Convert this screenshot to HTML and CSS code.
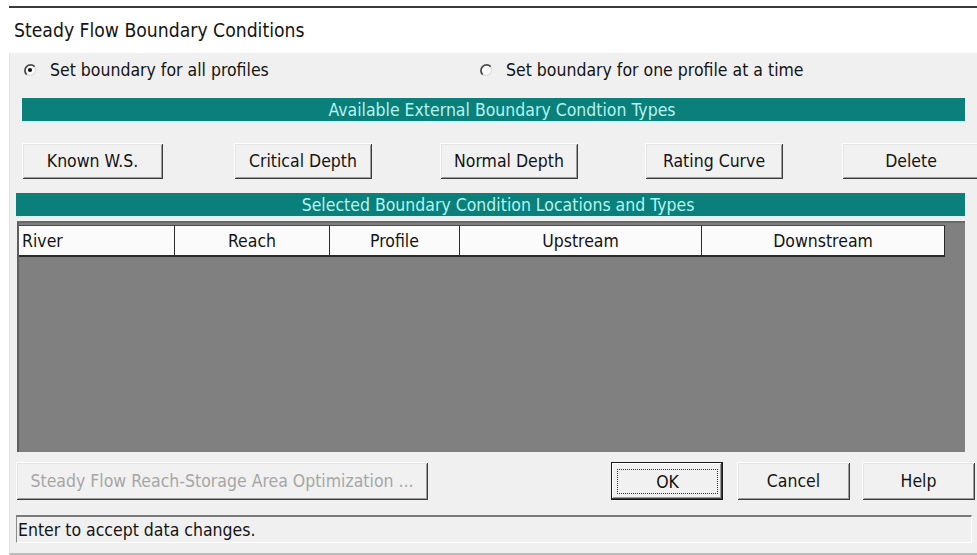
FILE: index.html
```html
<!DOCTYPE html>
<html lang="en">
<head>
<meta charset="utf-8">
<title>Steady Flow Boundary Conditions</title>
<link rel="stylesheet" href="styles.css">
</head>
<body>
<div class="window">
  <div class="caption">Steady Flow Boundary Conditions</div>
  <div class="dialog">
    <div class="radios">
      <label class="opt">
        <svg class="radio" viewBox="0 0 14 14" width="14" height="14">
          <circle cx="7" cy="7" r="5.6" fill="#fbfbfb"/>
          <path d="M3.04 10.96 A5.6 5.6 0 0 1 10.96 3.04" fill="none" stroke="#dcdcdc" stroke-width="1.2" transform="rotate(180 7 7)"/>
          <path d="M11.6 3.6 A5.6 5.6 0 1 0 3.6 11.6" fill="none" stroke="#4a4a4a" stroke-width="1.8"/>
          <circle cx="7" cy="7" r="2.1" fill="#111"/>
        </svg>
        <span>Set boundary for all profiles</span>
      </label>
      <label class="opt">
        <svg class="radio" viewBox="0 0 14 14" width="14" height="14">
          <circle cx="7" cy="7" r="5.6" fill="#fbfbfb"/>
          <path d="M3.04 10.96 A5.6 5.6 0 0 1 10.96 3.04" fill="none" stroke="#dcdcdc" stroke-width="1.2" transform="rotate(180 7 7)"/>
          <path d="M11.6 3.6 A5.6 5.6 0 1 0 3.6 11.6" fill="none" stroke="#4a4a4a" stroke-width="1.8"/>
        </svg>
        <span>Set boundary for one profile at a time</span>
      </label>
    </div>

    <div class="band band-types">Available External Boundary Condtion Types</div>

    <div class="type-buttons">
      <button class="btn btn-known">Known W.S.</button>
      <button class="btn btn-critical">Critical Depth</button>
      <button class="btn btn-normal">Normal Depth</button>
      <button class="btn btn-rating">Rating Curve</button>
      <button class="btn btn-delete">Delete</button>
    </div>

    <div class="band band-locations">Selected Boundary Condition Locations and Types</div>

    <div class="grid">
      <div class="grid-head">
        <div class="col col-river">River</div>
        <div class="col col-reach">Reach</div>
        <div class="col col-profile">Profile</div>
        <div class="col col-up">Upstream</div>
        <div class="col col-down">Downstream</div>
      </div>
    </div>

    <div class="actions">
      <button class="btn btn-optimize" disabled>Steady Flow Reach-Storage Area Optimization ...</button>
      <button class="btn btn-ok"><span class="focus">OK</span></button>
      <button class="btn btn-cancel">Cancel</button>
      <button class="btn btn-help">Help</button>
    </div>

    <div class="status">Enter to accept data changes.</div>
  </div>
</div>
</body>
</html>
```

FILE: styles.css
```css
* {
  box-sizing: border-box;
}

html,
body {
  margin: 0;
  height: 100%;
}

body {
  background: #ffffff;
  font-family: "DejaVu Sans Condensed", "DejaVu Sans", sans-serif;
  font-size: 17.5px;
  color: #141414;
  overflow: hidden;
}

/* window frame */
.window {
  margin: 6px 0 0 9px;
  width: 968px;
  height: 549px;
  border-top: 2px solid #3a3a3a;
  display: flex;
  flex-direction: column;
}

.caption {
  height: 45px;
  flex: none;
  background: #ffffff;
  padding-left: 5px;
  font-size: 19.2px;
  display: flex;
  align-items: center;
}

.dialog {
  flex: 1;
  width: 968px;
  background: #f0f0f0;
  border-left: 1px solid #e3e3e3;
  border-bottom: 2px solid #bcbcbc;
  display: flex;
  flex-direction: column;
  align-items: flex-start;
  overflow: hidden;
}

/* profile mode radios */
.radios {
  height: 37px;
  flex: none;
  display: grid;
  grid-template-columns: 456px auto;
  align-items: center;
  padding: 0 0 3px 13px;
}

.opt {
  display: flex;
  align-items: center;
  gap: 13px;
}

.radio {
  flex: none;
}

/* teal section bands */
.band {
  height: 25px;
  flex: none;
  background: #0b7f7a;
  color: #b4f4f0;
  border-bottom: 2px solid #d2f4f4;
  display: flex;
  align-items: center;
  justify-content: center;
}

.band-types {
  width: 943px;
  margin: 8px 0 0 12px;
  padding-left: 17px;
}

.band-locations {
  width: 949px;
  margin: 14px 0 0 6px;
  padding-left: 15px;
}

/* classic 3D push buttons */
.btn {
  font: inherit;
  color: #141414;
  background: #f1f1f1;
  border: none;
  padding: 0;
  flex: none;
  height: 36px;
  box-shadow:
    inset 1px 1px 0 #ffffff,
    inset -1px -1px 0 #3c3c3c,
    inset 2px 2px 0 #e4e4e4,
    inset -2px -2px 0 #9c9c9c;
}

.type-buttons {
  margin-top: 20px;
  height: 36px;
  flex: none;
  display: flex;
  padding-left: 12px;
}

.btn-known { width: 141px; }
.btn-critical { width: 138px; margin-left: 71px; }
.btn-normal { width: 138px; margin-left: 68px; }
.btn-rating { width: 138px; margin-left: 67px; }
.btn-delete { width: 138px; margin-left: 59px; }

/* boundary condition table */
.grid {
  width: 948px;
  margin: 3px 0 0 7px;
  height: 231px;
  flex: none;
  background: #808080;
  border-left: 2px solid #5e5e5e;
  border-top: 2px solid #6a6a6a;
  padding-top: 2px;
}

.grid-head {
  display: flex;
  height: 32px;
}

.col {
  flex: none;
  background: #fbfbfb;
  border-top: 1px solid #4a4a4a;
  border-right: 1px solid #2a2a2a;
  border-bottom: 2px solid #2a2a2a;
  display: flex;
  align-items: center;
  justify-content: center;
}

.col-river {
  width: 156px;
  justify-content: flex-start;
  padding-left: 3px;
}
.col-reach { width: 155px; }
.col-profile { width: 130px; }
.col-up { width: 242px; }
.col-down { width: 243px; }

/* dialog actions */
.actions {
  margin-top: 10px;
  height: 38px;
  flex: none;
  display: flex;
  padding-left: 6px;
}

.actions .btn {
  height: 38px;
}

.btn-optimize {
  width: 412px;
}

.btn:disabled {
  color: #a6a6a6;
}

.btn-ok {
  width: 112px;
  margin-left: 183px;
  display: flex;
  padding: 7px 5px 6px 6px;
  box-shadow:
    inset 0 0 0 1px #1a1a1a,
    inset -2px -2px 0 #3c3c3c,
    inset 2px 2px 0 #ffffff,
    inset -3px -3px 0 #9c9c9c;
}

.focus {
  flex: 1;
  border: 1px dotted #333333;
  display: flex;
  align-items: center;
  justify-content: center;
}

.btn-cancel {
  width: 113px;
  margin-left: 14px;
}

.btn-help {
  width: 113px;
  margin-left: 12px;
}

/* status line */
.status {
  width: 956px;
  margin: 15px 0 0 6px;
  height: 28px;
  flex: none;
  border-top: 2px solid #7a7a7a;
  border-left: 1px solid #8a8a8a;
  border-right: 1px solid #ffffff;
  border-bottom: 1px solid #ffffff;
  padding: 1px 0 0 1px;
  display: flex;
  align-items: center;
}
```
